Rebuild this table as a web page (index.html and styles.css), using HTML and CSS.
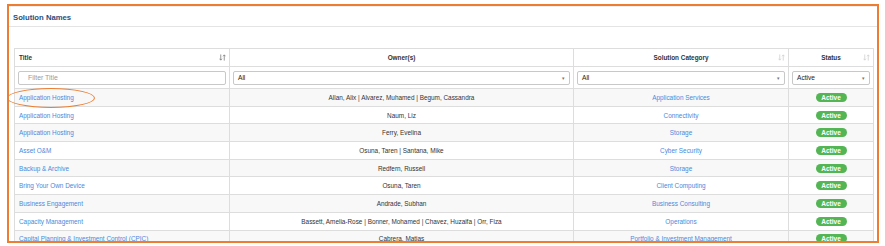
FILE: index.html
```html
<!DOCTYPE html>
<html>
<head>
<meta charset="utf-8">
<link rel="stylesheet" href="styles.css">
</head>
<body>
<div class="frame">
  <div class="panel">
    <div class="panel-heading">Solution Names</div>
    <div class="panel-body">
      <table class="grid">
        <colgroup>
          <col class="c1"><col class="c2"><col class="c3"><col class="c4">
        </colgroup>
        <thead>
          <tr class="head">
            <th class="left">Title<svg class="sort dark" viewBox="0 0 8 8"><path d="M2 0.5V7M0.6 5.4L2 7L3.4 5.4M6 7.5V1M4.6 2.6L6 1L7.4 2.6" /></svg></th>
            <th>Owner(s)</th>
            <th>Solution Category<svg class="sort" viewBox="0 0 8 8"><path d="M2 0.5V7M0.6 5.4L2 7L3.4 5.4M6 7.5V1M4.6 2.6L6 1L7.4 2.6" /></svg></th>
            <th>Status<svg class="sort" viewBox="0 0 8 8"><path d="M2 0.5V7M0.6 5.4L2 7L3.4 5.4M6 7.5V1M4.6 2.6L6 1L7.4 2.6" /></svg></th>
          </tr>
          <tr class="filters">
            <td><div class="input placeholder">Filter Title</div></td>
            <td><div class="input select">All<span class="caret">▾</span></div></td>
            <td><div class="input select">All<span class="caret">▾</span></div></td>
            <td><div class="input select">Active<span class="caret">▾</span></div></td>
          </tr>
        </thead>
        <tbody>
          <tr><td class="left first"><a>Application Hosting</a><span class="circle"></span></td><td>Allan, Alix | Alvarez, Muhamed | Begum, Cassandra</td><td><a>Application Services</a></td><td><span class="badge">Active</span></td></tr>
          <tr><td class="left"><a>Application Hosting</a></td><td>Naum, Liz</td><td><a>Connectivity</a></td><td><span class="badge">Active</span></td></tr>
          <tr><td class="left"><a>Application Hosting</a></td><td>Ferry, Evelina</td><td><a>Storage</a></td><td><span class="badge">Active</span></td></tr>
          <tr><td class="left"><a>Asset O&amp;M</a></td><td>Osuna, Taren | Santana, Mike</td><td><a>Cyber Security</a></td><td><span class="badge">Active</span></td></tr>
          <tr><td class="left"><a>Backup &amp; Archive</a></td><td>Redfern, Russell</td><td><a>Storage</a></td><td><span class="badge">Active</span></td></tr>
          <tr><td class="left"><a>Bring Your Own Device</a></td><td>Osuna, Taren</td><td><a>Client Computing</a></td><td><span class="badge">Active</span></td></tr>
          <tr><td class="left"><a>Business Engagement</a></td><td>Andrade, Subhan</td><td><a>Business Consulting</a></td><td><span class="badge">Active</span></td></tr>
          <tr><td class="left"><a>Capacity Management</a></td><td>Bassett, Amelia-Rose | Bonner, Mohamed | Chavez, Huzaifa | Orr, Fiza</td><td><a>Operations</a></td><td><span class="badge">Active</span></td></tr>
          <tr><td class="left"><a>Capital Planning &amp; Investment Control (CPIC)</a></td><td>Cabrera, Matias</td><td><a>Portfolio &amp; Investment Management</a></td><td><span class="badge">Active</span></td></tr>
        </tbody>
      </table>
    </div>
  </div>
</div>
</body>
</html>
```

FILE: styles.css
```css
html, body {
  margin: 0;
  padding: 0;
  background: #ffffff;
}
body {
  font-family: "Liberation Sans", Arial, sans-serif;
  color: #333333;
  padding: 4px 0 0 7px;
  height: 246px;
  box-sizing: border-box;
  overflow: hidden;
}
.frame {
  width: 872px;
  height: 239px;
  box-sizing: border-box;
  border: 2px solid #ed7d31;
  overflow: hidden;
  position: relative;
}
.panel {
  background: #ffffff;
}
.panel-heading {
  height: 21px;
  box-sizing: border-box;
  padding: 6px 0 0 4px;
  font-size: 7.7px;
  font-weight: bold;
  color: #2b4e7a;
  border-bottom: 1px solid #e4e4e4;
  border-top: 1px solid #f0f0f0;
}
.panel-body {
  padding: 21px 4px 0 5px;
}
.grid {
  width: 859px;
  border-collapse: collapse;
  table-layout: fixed;
  font-size: 6.4px;
}
.c1 { width: 215px; }
.c2 { width: 344px; }
.c3 { width: 215px; }
.c4 { width: 85px; }
.grid th, .grid td {
  border: 1px solid #dddddd;
  text-align: center;
  padding: 0 4px;
  position: relative;
  white-space: nowrap;
}
.grid th {
  height: 17px;
  font-weight: bold;
  color: #333;
}
.grid .left {
  text-align: left;
}
.grid th.left { padding-left: 4px; }
.grid td.left { padding-left: 4px; }
.sort {
  position: absolute;
  right: 3px;
  top: 5px;
  width: 7px;
  height: 7px;
  fill: none;
  stroke: #d0d0d0;
  stroke-width: 0.9;
}
.sort.dark {
  stroke: #7d7d7d;
}
.filters td {
  height: 21px;
  padding: 0 3px;
  text-align: left;
}
.input {
  height: 14px;
  box-sizing: border-box;
  border: 1px solid #c8c8c8;
  border-radius: 2px;
  font-size: 6.6px;
  line-height: 12px;
  padding: 0 4px;
  color: #222;
  position: relative;
  background: #fff;
}
.input.placeholder {
  color: #9a9a9a;
  padding-left: 9px;
  font-size: 6.9px;
}
.caret {
  position: absolute;
  right: 4px;
  top: 0;
  font-size: 5px;
  color: #777;
}
tbody tr td {
  height: 16.7px;
}
tbody tr:nth-child(odd) {
  background: #f8f8f8;
}
a {
  color: #4a89dc;
}
.badge {
  display: inline-block;
  width: 31px;
  height: 9px;
  line-height: 9px;
  border-radius: 5px;
  background: #53b553;
  color: #ffffff;
  font-weight: bold;
  font-size: 6.5px;
  vertical-align: middle;
}
.circle {
  position: absolute;
  left: -8px;
  top: -1px;
  width: 88px;
  height: 20px;
  box-sizing: border-box;
  border: 1.6px solid #ed7d31;
  border-radius: 50%;
}
```
